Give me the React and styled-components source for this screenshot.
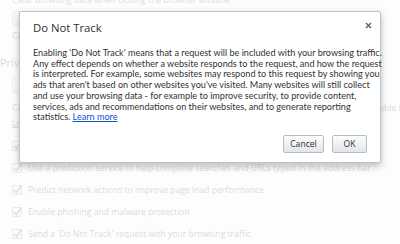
import React from 'react';
import styled, { createGlobalStyle } from 'styled-components';

const Global = createGlobalStyle`
  html, body {
    margin: 0;
    width: 400px;
    height: 244px;
    overflow: hidden;
    background: #fdfdfd;
  }
`;

const Page = styled.main`
  position: relative;
  width: 400px;
  height: 244px;
  overflow: hidden;
  font-family: 'Open Sans', 'Noto Sans', sans-serif;
  color: #3a3d33;
`;

const Settings = styled.section`
  padding-left: 12px;
  font-size: 8.6px;
`;

const Line = styled.div`
  margin-top: ${p => p.$top}px;
  line-height: ${p => p.$lh || 11}px;
  white-space: nowrap;
`;

const Heading = styled.h3`
  margin: ${p => p.$top}px 0 0 -12px;
  font-size: 11px;
  font-weight: normal;
  line-height: 14px;
  color: #444;
`;

const GhostButton = styled.div`
  margin-top: ${p => p.$top}px;
  width: ${p => p.$w}px;
  height: ${p => p.$h}px;
  border: 1px solid #a9b0b6;
  border-radius: 2px;
  background: linear-gradient(#fafafa, #e4e4e4);
  box-sizing: border-box;
`;

const Link = styled.a`
  color: #15c;
  text-decoration: underline;
`;

const CheckRow = styled.label`
  display: flex;
  align-items: center;
  gap: 6px;
  height: 22px;
  margin-top: ${p => p.$top || 0}px;
  white-space: nowrap;
`;

const Box = styled.span`
  display: inline-flex;
  width: 8px;
  height: 8px;
  border: 1px solid #8f8f8f;
  border-radius: 1px;
  background: linear-gradient(#fff, #e8e8e8);
  position: relative;
`;

const Tick = styled.svg`
  position: absolute;
  left: -1px;
  top: -2px;
`;

const Veil = styled.div`
  position: absolute;
  inset: 0;
  background: rgba(253, 253, 253, 0.82);
`;

const Dialog = styled.div`
  position: absolute;
  left: 19px;
  top: 11px;
  width: 362px;
  height: 152px;
  box-sizing: border-box;
  background: #fff;
  border: 1px solid #bfc3c7;
  border-radius: 2px;
  box-shadow: 0 3px 7px rgba(80, 90, 100, 0.4);
  padding: 9px 13px 9px 13px;
  display: flex;
  flex-direction: column;
  color: #333;
`;

const Title = styled.h1`
  margin: 0;
  font-size: 11.3px;
  font-weight: normal;
  line-height: 14px;
  color: #2e2e2e;
`;

const Close = styled.button`
  position: absolute;
  right: 7px;
  top: 8px;
  width: 10px;
  height: 10px;
  padding: 0;
  border: 0;
  background: none;
  display: flex;
  align-items: center;
  justify-content: center;
`;

const Body = styled.p`
  margin: 13px 0 0;
  font-family: Lato, 'Open Sans', sans-serif;
  font-size: 9.1px;
  line-height: 10.7px;
  color: #333;
  white-space: nowrap;
`;

const Actions = styled.div`
  margin-top: auto;
  display: flex;
  justify-content: flex-end;
  gap: 8px;
`;

const Button = styled.button`
  height: 18px;
  min-width: ${p => p.$w}px;
  padding: 0 6px;
  border: 1px solid #b4bcc4;
  border-radius: 2px;
  background: linear-gradient(#fcfcfc, #e2e6ea);
  font-family: inherit;
  font-size: 8.6px;
  color: #333;
  box-sizing: border-box;
`;

function Checkbox() {
  return (
    <Box>
      <Tick width="11" height="11" viewBox="0 0 11 11">
        <path d="M2 6 L4.5 8.5 L9.5 1.5" fill="none" stroke="#555" strokeWidth="1.6" />
      </Tick>
    </Box>
  );
}

const rows = [
  'Use a web service to help resolve navigation errors',
  'Use a prediction service to help complete searches and URLs typed in the address bar',
  'Predict network actions to improve page load performance',
  'Enable phishing and malware protection',
  "Send a 'Do Not Track' request with your browsing traffic",
];

const bodyLines = [
  "Enabling 'Do Not Track' means that a request will be included with your browsing traffic.",
  'Any effect depends on whether a website responds to the request, and how the request',
  'is interpreted. For example, some websites may respond to this request by showing you',
  "ads that aren't based on other websites you've visited. Many websites will still collect",
  'and use your browsing data - for example to improve security, to provide content,',
  'services, ads and recommendations on their websites, and to generate reporting',
];

export default function App() {
  return (
    <Page>
      <Global />
      <Settings>
        <Line $top={-5}>Clear browsing data when closing the browser window</Line>
        <GhostButton $top={5} $w={130} $h={14} />
        <Line $top={6}>Change proxy settings</Line>
        <Heading $top={14}>Privacy</Heading>
        <GhostButton $top={7} $w={110} $h={16} />
        <Line $top={8} $lh={14.5}>
          Chrome may use web services to improve your browsing experience. You may optionally disable these services.
          <br />
          <Link href="#">Learn more</Link>
        </Line>
        <CheckRow $top={5}><Checkbox />{rows[0]}</CheckRow>
        {rows.slice(1).map((r, i) => (
          <CheckRow key={i}><Checkbox />{r}</CheckRow>
        ))}
      </Settings>
      <Veil />
      <Dialog>
        <Title>Do Not Track</Title>
        <Close aria-label="Close">
          <svg width="7" height="7" viewBox="0 0 7 7">
            <path d="M1 1 L6 6 M6 1 L1 6" stroke="#666" strokeWidth="1.5" />
          </svg>
        </Close>
        <Body>
          {bodyLines.map((l, i) => (
            <React.Fragment key={i}>{l}<br /></React.Fragment>
          ))}
          statistics. <Link href="#">Learn more</Link>
        </Body>
        <Actions>
          <Button $w={41}>Cancel</Button>
          <Button $w={35}>OK</Button>
        </Actions>
      </Dialog>
    </Page>
  );
}
